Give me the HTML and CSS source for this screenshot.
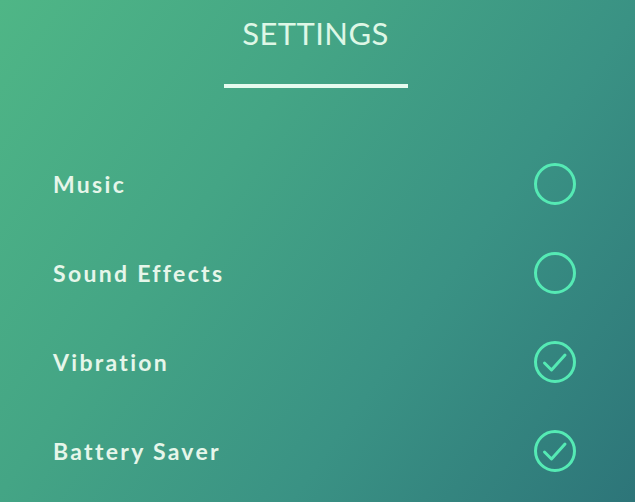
FILE: index.html
```html
<!DOCTYPE html>
<html lang="en">
<head>
<meta charset="utf-8">
<title>Settings</title>
<link rel="stylesheet" href="styles.css">
</head>
<body>
<main class="screen">
  <header class="header">
    <h1 class="title">SETTINGS</h1>
    <div class="rule"></div>
  </header>
  <ul class="list">
    <li class="row">
      <span class="label">Music</span>
      <svg class="toggle" viewBox="0 0 44 44" width="44" height="44"><circle cx="22" cy="22" r="19.5"/></svg>
    </li>
    <li class="row">
      <span class="label">Sound Effects</span>
      <svg class="toggle" viewBox="0 0 44 44" width="44" height="44"><circle cx="22" cy="22" r="19.5"/></svg>
    </li>
    <li class="row">
      <span class="label">Vibration</span>
      <svg class="toggle" viewBox="0 0 44 44" width="44" height="44"><circle cx="22" cy="22" r="19.5"/><path d="M11.5 23 L18.5 30 L32 15"/></svg>
    </li>
    <li class="row">
      <span class="label">Battery Saver</span>
      <svg class="toggle" viewBox="0 0 44 44" width="44" height="44"><circle cx="22" cy="22" r="19.5"/><path d="M11.5 23 L18.5 30 L32 15"/></svg>
    </li>
  </ul>
</main>
</body>
</html>
```

FILE: styles.css
```css
html, body {
  margin: 0;
  padding: 0;
}

body {
  width: 635px;
  height: 502px;
  overflow: hidden;
  font-family: Lato, "Open Sans", sans-serif;
}

.screen {
  width: 635px;
  height: 502px;
  box-sizing: border-box;
  background: linear-gradient(125deg, #4fb686 0%, #44a585 35%, #3a9284 65%, #2d7579 100%);
  display: flex;
  flex-direction: column;
}

.header {
  display: flex;
  flex-direction: column;
  align-items: center;
  padding-top: 14px;
  padding-right: 4px;
}

.title {
  margin: 0;
  font-weight: 400;
  font-size: 31px;
  line-height: 38px;
  letter-spacing: 0.4px;
  color: #def7e6;
}

.rule {
  width: 184px;
  height: 4px;
  margin-top: 32px;
  background: #e6fbef;
}

.list {
  list-style: none;
  margin: 0;
  padding: 74px 58px 0 53px;
  display: flex;
  flex-direction: column;
  gap: 45px;
}

.row {
  display: flex;
  align-items: center;
  justify-content: space-between;
  height: 44px;
}

.label {
  font-weight: 700;
  font-size: 23px;
  letter-spacing: 2.3px;
  color: #e6f6ea;
}

.toggle {
  display: block;
  fill: none;
  stroke: #55eab4;
  stroke-width: 3;
  stroke-linecap: round;
  stroke-linejoin: round;
}
```
